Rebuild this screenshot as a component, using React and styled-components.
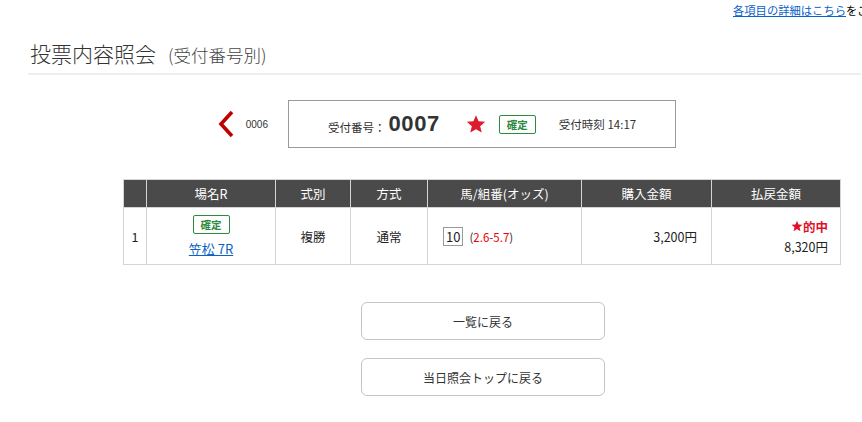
import styled, { createGlobalStyle } from "styled-components";

const GlobalStyle = createGlobalStyle`
  body {
    margin: 0;
    padding: 0;
    background: #fff;
    overflow: hidden;
    font-family: "Liberation Sans", "Noto Sans CJK JP", sans-serif;
    color: #333;
  }
`;

const Page = styled.div`
  width: 862px;
  overflow: hidden;
`;

const TopBar = styled.div`
  padding: 4px 0 0 733px;
  white-space: nowrap;
  font-size: 11.3px;
  line-height: 15px;
  color: #000;

  a {
    color: #0a62c9;
    text-decoration: underline;
  }
`;

const TitleRow = styled.div`
  margin: 21px 1px 0 28px;
  padding: 0 0 6px 2px;
  border-bottom: 2px solid #eee;
  display: flex;
  align-items: baseline;
  gap: 12px;
`;

const Title = styled.h1`
  margin: 0;
  font-family: "Noto Sans CJK JP", sans-serif;
  font-weight: 300;
  font-size: 21px;
  line-height: 26px;
  color: #333;
`;

const SubTitle = styled.span`
  font-family: "Noto Sans CJK JP", sans-serif;
  font-weight: 300;
  font-size: 17.5px;
  color: #444;
`;

const TicketRow = styled.div`
  display: grid;
  grid-template-columns: 1fr auto 1fr;
  align-items: center;
  margin: 25px 0 0 0;
  width: 964px;
`;

const PrevLink = styled.div`
  justify-self: end;
  margin-right: 20px;
  display: flex;
  align-items: center;
  gap: 12px;
  font-size: 10px;
  color: #333;
`;

const TicketBox = styled.div`
  width: 388px;
  height: 48px;
  border: 1px solid #999;
  display: flex;
  align-items: center;
  padding-left: 39px;
  box-sizing: border-box;
`;

const Label = styled.span`
  font-family: "Noto Sans CJK JP", sans-serif;
  font-size: 11.5px;
  color: #333;
  margin-top: 6px;
`;

const TicketNo = styled.span`
  font-weight: bold;
  font-size: 22px;
  color: #333;
  margin-left: 3px;
  letter-spacing: 0.6px;
`;

const StarWrap = styled.span`
  margin-left: 26px;
  display: block;
  line-height: 0;
`;

const Badge = styled.span`
  display: inline-block;
  border: 1px solid #2e8b3e;
  border-radius: 2px;
  color: #2e8b3e;
  font-family: "Noto Sans CJK JP", sans-serif;
  font-size: 10.5px;
  font-weight: bold;
  line-height: 15px;
  padding: 1px 7px;
  margin-left: ${(p) => p.$ml || 0}px;
`;

const Time = styled.span`
  font-family: "Noto Sans CJK JP", sans-serif;
  font-size: 11.5px;
  color: #333;
  margin-left: 23px;
`;

const Table = styled.table`
  margin: 31px 0 0 123px;
  width: 718px;
  border-collapse: collapse;
  font-family: "Noto Sans CJK JP", sans-serif;
  font-size: 12.5px;

  th {
    background: #4a4a4a;
    color: #fff;
    font-weight: normal;
    height: 27px;
    padding: 0;
    border: 1px solid #d4d4d4;
  }

  td {
    border: 1px solid #d4d4d4;
    height: 56px;
    padding: 0;
    color: #222;
  }
`;

const Cell = styled.td`
  text-align: ${(p) => p.$align || "center"};
  padding: ${(p) => p.$pad || "0"} !important;
`;

const Stack = styled.div`
  display: flex;
  flex-direction: column;
  align-items: ${(p) => p.$align || "center"};
  gap: ${(p) => p.$gap || 4}px;
`;

const RaceLink = styled.a`
  color: #0a62c9;
  text-decoration: underline;
  font-size: 13px;
`;

const HorseNo = styled.span`
  display: inline-block;
  border: 1px solid #999;
  padding: 0 2px;
  font-size: 13px;
  line-height: 17px;
  margin-right: 6px;
`;

const Odds = styled.span`
  font-size: 11.5px;
  color: #333;

  b {
    font-weight: normal;
    color: #e00;
  }
`;

const Hit = styled.span`
  color: #e0102a;
  font-weight: bold;
  font-size: 12.5px;
  display: flex;
  align-items: center;
`;

const Buttons = styled.div`
  display: flex;
  flex-direction: column;
  align-items: center;
  gap: 18px;
  margin: 37px 0 0 0;
  width: 966px;
`;

const Button = styled.button`
  width: 244px;
  height: 38px;
  border: 1px solid #c4c4c4;
  border-radius: 6px;
  background: #fff;
  font-family: "Noto Sans CJK JP", sans-serif;
  font-size: 12px;
  color: #333;
  cursor: pointer;
`;

const StarIcon = ({ size, color }) => (
  <svg width={size} height={size} viewBox="0 0 24 24">
    <path
      d="M12 1.5l3.1 7.3 7.9.6-6 5.2 1.9 7.7L12 18.2l-6.9 4.1 1.9-7.7-6-5.2 7.9-.6z"
      fill={color}
    />
  </svg>
);

export default function App() {
  return (
    <Page>
      <GlobalStyle />
      <TopBar>
        <a href="#">各項目の詳細はこちら</a>をご覧ください。
      </TopBar>
      <TitleRow>
        <Title>投票内容照会</Title>
        <SubTitle>(受付番号別)</SubTitle>
      </TitleRow>

      <TicketRow>
        <PrevLink>
          <svg width="16" height="28" viewBox="0 0 16 28">
            <path
              d="M14 2 L3 14 L14 26"
              fill="none"
              stroke="#c00000"
              strokeWidth="3.6"
            />
          </svg>
          <span>0006</span>
        </PrevLink>
        <TicketBox>
          <Label>受付番号：</Label>
          <TicketNo>0007</TicketNo>
          <StarWrap>
            <StarIcon size={20} color="#dc1b2e" />
          </StarWrap>
          <Badge $ml={13}>確定</Badge>
          <Time>受付時刻 14:17</Time>
        </TicketBox>
        <div />
      </TicketRow>

      <Table>
        <thead>
          <tr>
            <th style={{ width: 22 }}></th>
            <th style={{ width: 128 }}>場名R</th>
            <th style={{ width: 74 }}>式別</th>
            <th style={{ width: 76 }}>方式</th>
            <th style={{ width: 153 }}>馬/組番(オッズ)</th>
            <th style={{ width: 129 }}>購入金額</th>
            <th>払戻金額</th>
          </tr>
        </thead>
        <tbody>
          <tr>
            <Cell>1</Cell>
            <Cell>
              <Stack $gap={5}>
                <Badge>確定</Badge>
                <RaceLink href="#">笠松 7R</RaceLink>
              </Stack>
            </Cell>
            <Cell>複勝</Cell>
            <Cell>通常</Cell>
            <Cell $align="left" $pad="0 0 0 15px">
              <HorseNo>10</HorseNo>
              <Odds>
                (<b>2.6</b>-<b>5.7</b>)
              </Odds>
            </Cell>
            <Cell $align="right" $pad="0 14px 0 0">
              3,200円
            </Cell>
            <Cell $align="right" $pad="0 12px 0 0">
              <Stack $align="flex-end" $gap={1}>
                <Hit>
                  <StarIcon size={12} color="#e0102a" />
                  的中
                </Hit>
                <span>8,320円</span>
              </Stack>
            </Cell>
          </tr>
        </tbody>
      </Table>

      <Buttons>
        <Button>一覧に戻る</Button>
        <Button>当日照会トップに戻る</Button>
      </Buttons>
    </Page>
  );
}
